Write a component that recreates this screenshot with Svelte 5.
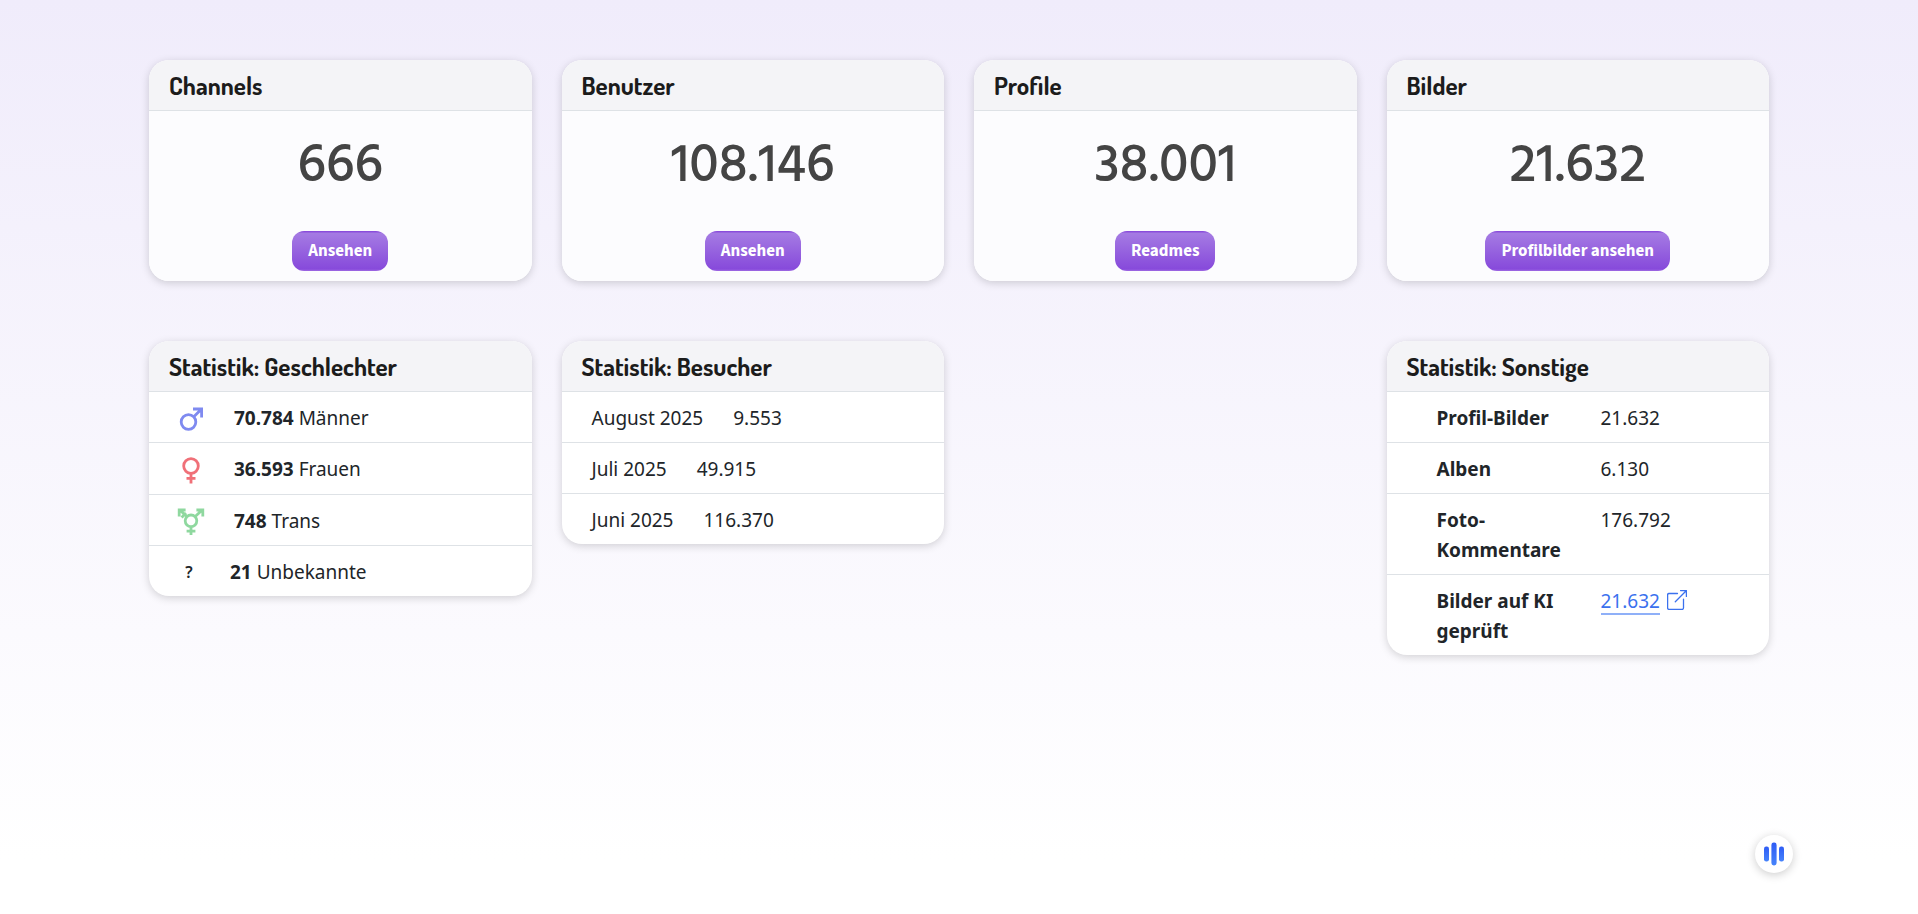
<script>
  const totals = [
    { title: 'Channels', value: '666', action: 'Ansehen' },
    { title: 'Benutzer', value: '108.146', action: 'Ansehen' },
    { title: 'Profile', value: '38.001', action: 'Readmes' },
    { title: 'Bilder', value: '21.632', action: 'Profilbilder ansehen' }
  ];
  const genders = [
    { icon: 'male', count: '70.784', label: 'Männer' },
    { icon: 'female', count: '36.593', label: 'Frauen' },
    { icon: 'trans', count: '748', label: 'Trans' },
    { icon: 'unknown', count: '21', label: 'Unbekannte' }
  ];
  const visitors = [
    { month: 'August 2025', count: '9.553' },
    { month: 'Juli 2025', count: '49.915' },
    { month: 'Juni 2025', count: '116.370' }
  ];
  const others = [
    { label: 'Profil-Bilder', count: '21.632' },
    { label: 'Alben', count: '6.130' },
    { label: 'Foto-Kommentare', count: '176.792' },
    { label: 'Bilder auf KI geprüft', count: '21.632', link: true }
  ];
</script>

<main>
  <div class="grid">
    {#each totals as t}
      <section class="card">
        <h2>{t.title}</h2>
        <div class="body">
          <p class="number">{t.value}</p>
          <button class="action" type="button">{t.action}</button>
        </div>
      </section>
    {/each}
  </div>

  <div class="grid">
    <section class="card">
      <h2>Statistik: Geschlechter</h2>
      <ul>
        {#each genders as g}
          <li class="gender">
            {#if g.icon === 'male'}
              <svg class="male" viewBox="0 0 28 28" aria-hidden="true">
                <circle cx="11.5" cy="18" r="7.3" />
                <path d="M16.8 12.7 24.5 5M16 5h8.6v8.6" />
              </svg>
            {:else if g.icon === 'female'}
              <svg class="female" viewBox="0 0 28 30" aria-hidden="true">
                <circle cx="14" cy="11" r="7.3" />
                <path d="M14 18.3V28.5M9.5 23.3h9" />
              </svg>
            {:else if g.icon === 'trans'}
              <svg class="trans" viewBox="0 0 28 28" aria-hidden="true">
                <circle cx="14" cy="13.8" r="5.8" />
                <path d="M14 19.6V28M9.6 24.2h8.8M18.2 9.6l7-6.6M19.4 3h6.4v6.4M9.8 9.6l-7-6.6M2.2 9.4V3h6.4M4.6 10.4l4.4-4.4" />
              </svg>
            {:else}
              <span class="unknown">?</span>
            {/if}
            <span><strong>{g.count}</strong> {g.label}</span>
          </li>
        {/each}
      </ul>
    </section>

    <section class="card">
      <h2>Statistik: Besucher</h2>
      <ul>
        {#each visitors as v}
          <li class="visitor"><span>{v.month}</span><span>{v.count}</span></li>
        {/each}
      </ul>
    </section>

    <section class="card others">
      <h2>Statistik: Sonstige</h2>
      <table>
        <tbody>
          {#each others as o}
            <tr>
              <th scope="row">{o.label}</th>
              <td>
                {#if o.link}
                  <a href="#pruefung"><span>{o.count}</span><svg viewBox="0 0 20 20" aria-hidden="true">
                      <path d="M10.5 3.5H2a1.4 1.4 0 0 0-1.4 1.4V18A1.4 1.4 0 0 0 2 19.4h13.1a1.4 1.4 0 0 0 1.4-1.4V9.2M13.6.6h5.8v5.8M19.2.8 8.3 11.7" />
                    </svg></a>
                {:else}
                  {o.count}
                {/if}
              </td>
            </tr>
          {/each}
        </tbody>
      </table>
    </section>
  </div>
</main>

<button class="float" type="button" aria-label="Statistik">
  <svg viewBox="0 0 38 38" aria-hidden="true">
    <defs>
      <linearGradient id="bars" x1="0" y1="0" x2="0" y2="1">
        <stop offset="0" stop-color="#2f5cf5" />
        <stop offset="1" stop-color="#4684fb" />
      </linearGradient>
    </defs>
    <g fill="url(#bars)">
      <rect x="9" y="11.5" width="5" height="15" rx="2.2" />
      <rect x="16.4" y="7.5" width="5.2" height="23" rx="2.4" />
      <rect x="24" y="11.5" width="5" height="15" rx="2.2" />
    </g>
  </svg>
</button>

<style>
  :global(body) {
    min-height: 100vh;
    background: linear-gradient(#f0ecfb, #fff 94%) no-repeat;
    color: #212529;
    font: 19px/30px "Segoe UI", Selawik, "Noto Sans", "Open Sans", sans-serif;
  }
  main {
    max-width: 1620px;
    margin: 0 auto;
    padding: 60px 30px;
  }
  .grid {
    display: grid;
    grid-template-columns: repeat(4, minmax(0, 1fr));
    gap: 30px;
    align-items: start;
  }
  .grid + .grid {
    margin-top: 60px;
  }
  .card {
    overflow: hidden;
    border-radius: 20px;
    background: #fff;
    box-shadow: 0 2px 8px rgba(0, 0, 0, 0.17);
  }
  .others {
    grid-column: 4;
  }
  h2 {
    margin: 0;
    padding: 10px 20px;
    border-bottom: 1px solid #dee2e6;
    background: #f4f4f7;
    color: #1c1c1c;
    font: 700 25px/30px Dosis, "Liberation Sans Narrow", Lato, sans-serif;
  }
  .body {
    display: flex;
    flex-direction: column;
    align-items: center;
    padding: 26px 20px 10px;
    background: #fcfcfe;
  }
  .number {
    margin: 0 0 34px;
    color: #444;
    font-family: Hind, Mukta, "Noto Sans", sans-serif;
    font-size: 54px;
    font-weight: 500;
    line-height: 60px;
  }
  .action {
    height: 40px;
    padding: 0 16px;
    border: 0;
    border-radius: 12px;
    background: linear-gradient(#8a4ddb 1px, #a57be3 2px, #874adb 38px, #a06be3);
    color: #fff;
    font: 700 17px/38px "Source Sans 3", "Source Sans Pro", "Noto Sans CJK JP", sans-serif;
  }
  ul {
    margin: 0;
    padding: 0;
    list-style: none;
  }
  li {
    display: flex;
    padding: 11px 30px 9px;
  }
  li + li,
  tr + tr > * {
    border-top: 1px solid #dee2e6;
  }
  .gender {
    gap: 29px;
    padding-left: 28px;
  }
  .gender svg {
    width: 28px;
    height: 28px;
    margin-top: 1px;
    fill: none;
    stroke-width: 2.8;
  }
  .male {
    stroke: #7f8af0;
  }
  .gender .female {
    height: 30px;
    stroke: #f07078;
  }
  .trans {
    stroke: #8fd89f;
  }
  .unknown {
    width: 24px;
    font-size: 16px;
    font-weight: 600;
    text-align: center;
  }
  .visitor {
    gap: 30px;
  }
  table {
    width: 100%;
    border-collapse: collapse;
    table-layout: fixed;
  }
  th,
  td {
    padding: 11px 0 9px;
    text-align: left;
    vertical-align: top;
  }
  th {
    width: 134px;
    padding-right: 30px;
    padding-left: 50px;
  }
  a {
    display: inline-flex;
    gap: 7px;
    color: #3b71ee;
    text-decoration: none;
  }
  a span {
    height: 27px;
    border-bottom: 2px solid #8fb0f8;
  }
  a svg {
    width: 20px;
    height: 20px;
    margin-top: 4px;
    fill: none;
    stroke: currentColor;
    stroke-width: 1.3;
    stroke-linecap: round;
    stroke-linejoin: round;
  }
  .float {
    position: fixed;
    right: 125px;
    bottom: 41px;
    width: 38px;
    height: 38px;
    padding: 0;
    border: 0;
    border-radius: 50%;
    background: #fff;
    box-shadow: 0 2px 10px rgba(0, 0, 0, 0.2);
  }
  .float svg {
    display: block;
  }
</style>
